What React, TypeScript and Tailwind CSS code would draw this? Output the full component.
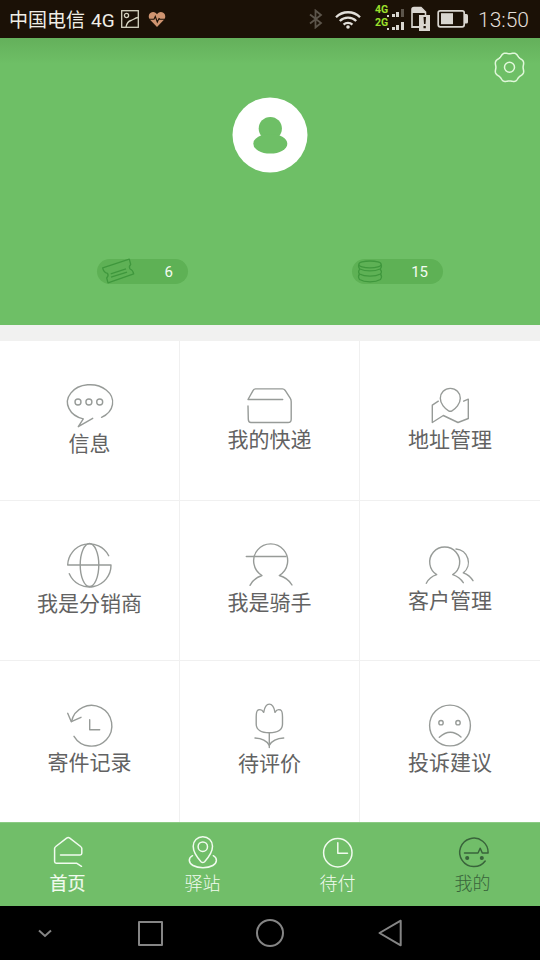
import type { ReactNode } from "react";

interface MenuItem {
  label: string;
  // icon height decides where the label starts
  height: number;
  icon: ReactNode;
}

interface TabItem {
  label: string;
  className: string;
  icon: ReactNode;
}

const menu: MenuItem[] = [
  {
    label: "信息",
    height: 50,
    icon: (
      <>
        <path d="M41.5 37.3A22.6 17.5 0 1 0 23.3 38.9L18.3 46.7L32.7 38.3" />
        <circle cx="18" cy="22" r="3" />
        <circle cx="28.9" cy="22" r="3" />
        <circle cx="39.7" cy="22" r="3" />
      </>
    ),
  },
  {
    label: "我的快递",
    height: 46,
    icon: (
      <path d="M42.7 19.5H8L13.3 10.2Q14 8.9 15.5 8.9H42.5Q44 8.9 45 10.2L50.2 18.2Q51.2 19.7 51.2 21.7V39.2Q51.2 42.5 48 42.5H11Q8.4 42.5 8.3 39.2L8 25.9" />
    ),
  },
  {
    label: "地址管理",
    height: 46,
    icon: (
      <>
        <path d="M30.3 8.4C36 8.4 40.3 12.8 40.3 18.2C40.3 24 35.6 28.8 32 30.8Q30.3 31.7 28.6 30.8C25 28.8 20.3 24 20.3 18.2C20.3 12.8 24.6 8.4 30.3 8.4Z" />
        <path d="M18.3 21.2L12.3 25.2V42.5L23.3 35.5L38 42.5L48.3 38.5V19.2L43.7 21.2" />
      </>
    ),
  },
  {
    label: "我是分销商",
    height: 50,
    icon: (
      <>
        <path d="M48.7 15.7A21.7 21.7 0 0 0 7.7 25H51A21.7 21.7 0 0 1 9.3 33.7" />
        <ellipse cx="29.5" cy="25" rx="9.3" ry="21.5" />
      </>
    ),
  },
  {
    label: "我是骑手",
    height: 49,
    icon: (
      <>
        <path d="M10 45.3Q14 37.8 22 35.5A17 17 0 1 1 39.3 35.5Q47.8 37.8 52 45" />
        <path d="M6.3 16.5H46" />
      </>
    ),
  },
  {
    label: "客户管理",
    height: 47,
    icon: (
      <>
        <path d="M6.3 43.3Q9.5 37 16.7 34.7A15 15 0 1 1 32.7 34.7Q39.5 37 43.3 42.7" />
        <path d="M36 9A13.4 13.4 0 0 1 43.3 32.9Q49.5 35 53 40.7" />
      </>
    ),
  },
  {
    label: "寄件记录",
    height: 49,
    icon: (
      <>
        <path d="M14 36.3A20.4 20.4 0 1 0 11.5 21.5" />
        <path d="M7.7 13.3L11.3 21.7L21 17.3" />
        <path d="M29.7 19.7V29.7H39.7" />
      </>
    ),
  },
  {
    label: "待评价",
    height: 50,
    icon: (
      <>
        <path d="M23.7 12.3C24.5 7.5 26.5 4.1 29.3 4.1S34.2 7.5 35 12.3C36.5 9.7 39 9.3 40.7 10C42.5 11 42.5 14 42.5 17V24C42.5 30 37 32.7 29.3 32.7S16.2 30 16.2 24V17C16.2 14 16.2 11 18 10C19.7 9.3 22.2 9.7 23.7 12.3Z" />
        <path d="M29.3 32.7V47.5" />
        <path d="M15 38Q25.5 38.5 29.3 45.3Q33.2 38.5 43.7 38" />
      </>
    ),
  },
  {
    label: "投诉建议",
    height: 49,
    icon: (
      <>
        <circle cx="30" cy="25.5" r="20.4" />
        <circle cx="21" cy="22.7" r="2.2" />
        <circle cx="38" cy="22.7" r="2.2" />
        <path d="M19.3 37.3Q30.2 27.2 41 37" />
      </>
    ),
  },
];

const tabs: TabItem[] = [
  {
    label: "首页",
    className: "[-webkit-text-stroke:0.2px] text-[#f1fbef]",
    icon: (
      <path d="M31.5 32.3L26.5 29.2H6.3Q4.6 29.2 4.6 27.5V14.6Q4.6 13.3 5.8 12.5L16.6 4.1Q18.2 3 19.8 4.1L30.6 12.5Q31.8 13.3 31.8 14.6V19.3Q31.8 21 30.1 21H10.5" />
    ),
  },
  {
    label: "驿站",
    className: "font-light text-[#f1fbef]",
    icon: (
      <>
        <path d="M17.8 2.8C23.4 2.8 27.5 7 27.5 12.3C27.5 18 23 24 19.6 27.7Q17.8 29.4 16 27.7C12.6 24 8.2 18 8.2 12.3C8.2 7 12.2 2.8 17.8 2.8Z" />
        <circle cx="17.8" cy="12.7" r="4.7" />
        <path d="M7.5 21.7C2.8 24.2 3.6 29 8 31.5C13.5 34.5 22.5 34.5 27.8 31.5C32.2 29 32.8 24.2 28.3 21.7" />
      </>
    ),
  },
  {
    label: "待付",
    className: "font-light text-[#f1fbef]",
    icon: (
      <>
        <circle cx="17.8" cy="18.8" r="14.2" />
        <path d="M17.8 8.7V19.2H27.5" />
      </>
    ),
  },
  {
    label: "我的",
    className: "font-light text-[#39643b]",
    icon: (
      <>
        <path d="M30.2 27A14.2 14.2 0 1 1 33.1 19H27.3L25.2 14.2L23 19H9.5" />
        <circle cx="12.2" cy="24" r="1.3" fill="currentColor" />
        <circle cx="26.8" cy="24" r="1.3" fill="currentColor" />
      </>
    ),
  },
];

function gearPath() {
  const points: string[] = [];
  for (let i = 0; i < 120; i++) {
    const a = (i / 120) * Math.PI * 2;
    const r = 14.3 - 0.7 * Math.cos(8 * a);
    points.push(`${(15.5 + r * Math.cos(a)).toFixed(2)} ${(16.3 + r * Math.sin(a)).toFixed(2)}`);
  }
  return `M${points.join("L")}Z`;
}

function StatusBar() {
  return (
    <div className="flex h-[38px] items-center bg-[#1b1106] pl-[9px] text-[#f0eee6]">
      <span className="w-[112px] whitespace-nowrap pt-[3px] text-[19px] leading-[35px]">
        中国电信<span className="ml-[6px]">4G</span>
      </span>
      <svg className="h-[18px] w-[18px]" viewBox="0 0 18 18" fill="none" stroke="#d5d3c0" strokeWidth="1.3">
        <rect x="0.7" y="0.7" width="16.6" height="16.6" />
        <circle cx="5.5" cy="5.5" r="2.1" />
        <path d="M5 17C6 12 8 11 10 10.5S14 8 17 7.5" />
      </svg>
      <svg className="ml-[9px] h-[17px] w-[18px]" viewBox="0 0 18 17">
        <path d="M9 16L1.8 8.6C-.3 6 .7 1 5 1C7 1 8.3 2 9 3.3C9.7 2 11 1 13 1C17.3 1 18.3 6 16.2 8.6Z" fill="#cf9470" />
        <path d="M1 8.3H6L7.3 5.5L9.3 11L11 7.5L12 8.3H17" fill="none" stroke="#1b1106" strokeWidth="1.1" />
      </svg>
      <svg className="ml-[143px] h-5 w-[14px]" viewBox="0 0 14 20" fill="none" stroke="#5c554b" strokeWidth="1.8">
        <path d="M1 5.5L12 14L6.5 18.5V1.5L12 6L1 14.5" />
      </svg>
      <svg className="ml-[12px] h-[19px] w-[26px]" viewBox="0 0 26 19" fill="none" stroke="#e2dfd9" strokeWidth="2.3">
        <path d="M1 7.2A17 17 0 0 1 25 7.2" />
        <path d="M4.8 11A11.6 11.6 0 0 1 21.2 11" />
        <path d="M8.6 14.6A6.3 6.3 0 0 1 17.4 14.6" />
        <circle cx="13" cy="17" r="1.8" fill="#e2dfd9" stroke="none" />
      </svg>
      <div className="ml-[14px] flex w-[12px] flex-col pb-[6px] text-[10.5px] font-bold leading-[13px] text-[#9be02c]">
        <span>4G</span>
        <span>2G</span>
      </div>
      <svg className="h-6 w-[18px]" viewBox="0 0 18 24" fill="#d9d6d0">
        <path d="M0 8h2v2H0zM5 7h3v3H5zM9 5h3v5H9z" />
        <path d="M14 2h3v8h-3z" fill="#5c554b" />
        <path d="M0 21h2v2H0zM5 20h3v3H5zM9 18h3v5H9zM14 15h3v8h-3z" />
      </svg>
      <svg className="ml-[6px] h-[26px] w-5" viewBox="0 0 20 26">
        <path d="M1 22V3.5Q1 1.5 3 1.5H10L14.5 6V9" fill="none" stroke="#d9d6d0" strokeWidth="1.6" />
        <path d="M1 2H10L14.5 6V7H1zM1 20H8V22H1z" fill="#d9d6d0" />
        <rect x="8" y="9" width="11" height="16" fill="#d9d6d0" />
        <path d="M12.5 11H15L14.5 18H13zM12.5 20H14.8V22.3H12.5z" fill="#1b1106" />
      </svg>
      <svg className="ml-[6px] h-5 w-8" viewBox="0 0 32 20">
        <rect x="1.2" y="1.8" width="26" height="16" rx="2" fill="none" stroke="#d9d6d0" strokeWidth="1.7" />
        <rect x="4" y="4.2" width="12" height="11" fill="#d9d6d0" />
        <path d="M28 5H29.5Q31 5 31 6.5V13Q31 14.5 29.5 14.5H28Z" fill="#d9d6d0" />
      </svg>
      <span className="ml-[9px] pt-[2px] text-[21px] font-light leading-9 text-[#e2dfd9]">13:50</span>
    </div>
  );
}

function Pill({ value, children }: { value: number; children: ReactNode }) {
  return (
    <div className="flex h-[25px] w-[91px] items-center justify-between rounded-full bg-[#5eb155] pr-[15px]">
      <svg className="h-[30px] w-[43px] shrink-0" viewBox="0 0 43 30" fill="none" stroke="#3f973d" strokeWidth="1.3" strokeLinejoin="round">
        {children}
      </svg>
      <span className="pt-px text-[15px] text-[#f3fcf1]">{value}</span>
    </div>
  );
}

function Header() {
  return (
    <header className="flex h-[287px] flex-col bg-[linear-gradient(#64b05b_0px,#6ebf66_26px)]">
      <div className="flex h-[59px] justify-end pr-[14px] pt-[13px]">
        <svg className="h-8 w-8" viewBox="0 0 32 32" fill="none" stroke="#e1f8db" strokeWidth="1.5">
          <path d={gearPath()} />
          <circle cx="15.5" cy="16.3" r="5" />
        </svg>
      </div>
      <div className="mx-auto h-[76px] w-[76px] shrink-0">
        <svg viewBox="0 0 76 76">
          <circle cx="38" cy="38" r="37.5" fill="#fff" />
          <circle cx="38.3" cy="31.5" r="11.6" fill="#6ebf66" />
          <ellipse cx="38.3" cy="46.7" rx="17" ry="9.8" fill="#6ebf66" />
        </svg>
      </div>
      <div className="mt-[86px] flex justify-between px-[97px]">
        <Pill value={6}>
          <path d="M5.7 10.8L32.3 2.2L33.7 7.5Q31.5 9.5 33 12Q36 13 36.7 16.8L11 25.8L9.7 21Q12 18.5 10.5 16.3Q6.5 15.5 5.7 10.8Z" />
          <path d="M13.7 16.8L29 11.8M14 20.2L30 15.2" />
        </Pill>
        <Pill value={15}>
          <ellipse cx="18" cy="7.4" rx="11.2" ry="3.4" />
          <path d="M6.8 7.7Q6 10.5 8 12Q12 13.9 18 13.9T28 12Q30 10.5 29.2 7.7" />
          <path d="M8 12Q5.5 14.5 7.5 17Q11.5 19.2 18 19.2T28.5 17Q30.5 14.5 28 12" />
          <path d="M7.5 17Q5.5 19.5 7.5 22.5Q11.5 24.8 18 24.8T28.5 22.5Q30.5 19.5 28.5 17" />
        </Pill>
      </div>
    </header>
  );
}

function MenuCell({ item }: { item: MenuItem }) {
  return (
    <div className="flex flex-col items-center bg-white pt-[39px]">
      <svg
        className="shrink-0"
        width="60"
        height={item.height}
        viewBox={`0 0 60 ${item.height}`}
        fill="none"
        stroke="#979b98"
        strokeWidth="1.4"
        strokeLinecap="round"
        strokeLinejoin="round"
      >
        {item.icon}
      </svg>
      <span className="text-[21px] leading-7 text-[#626262]">{item.label}</span>
    </div>
  );
}

function TabBar() {
  return (
    <nav className="grid h-[84px] grid-cols-4 border-t border-[#8bcb84] bg-[#71be69]">
      {tabs.map((tab) => (
        <div key={tab.label} className={`flex flex-col items-center pt-[11px] ${tab.className}`}>
          <svg className="h-9 w-9 shrink-0" viewBox="0 0 36 36" fill="none" stroke="currentColor" strokeWidth="1.5" strokeLinecap="round" strokeLinejoin="round">
            {tab.icon}
          </svg>
          <span className="pt-px text-[18px] leading-[26px]">{tab.label}</span>
        </div>
      ))}
    </nav>
  );
}

function SystemBar() {
  return (
    <div className="flex h-[54px] items-center bg-black text-[#858585]">
      <div className="flex w-[90px] justify-center">
        <svg className="h-4 w-4" viewBox="0 0 16 16" fill="none" stroke="currentColor" strokeWidth="2">
          <path d="M2 5.5L8 11L14 5.5" />
        </svg>
      </div>
      <div className="flex w-[120px] justify-center">
        <div className="h-[25px] w-[25px] rounded-[1px] border-2 border-current" />
      </div>
      <div className="flex w-[120px] justify-center">
        <div className="h-7 w-7 rounded-full border-2 border-current" />
      </div>
      <div className="flex w-[120px] justify-center">
        <svg className="h-7 w-6" viewBox="0 0 24 28" fill="none" stroke="currentColor" strokeWidth="2" strokeLinejoin="round">
          <path d="M1.5 14L22.7 1.7V26.3Z" />
        </svg>
      </div>
    </div>
  );
}

export default function App() {
  return (
    <div className="flex h-[960px] w-[540px] flex-col overflow-hidden bg-white font-[Roboto,'Noto_Sans_CJK_SC',sans-serif]">
      <StatusBar />
      <Header />
      <div className="h-4 bg-[#f1f1f0]" />
      <div className="grid h-[481px] grid-cols-[179px_179px_180px] grid-rows-[159px_159px_161px] gap-px bg-[#f0f0f0]">
        {menu.map((item) => (
          <MenuCell key={item.label} item={item} />
        ))}
      </div>
      <TabBar />
      <SystemBar />
    </div>
  );
}
